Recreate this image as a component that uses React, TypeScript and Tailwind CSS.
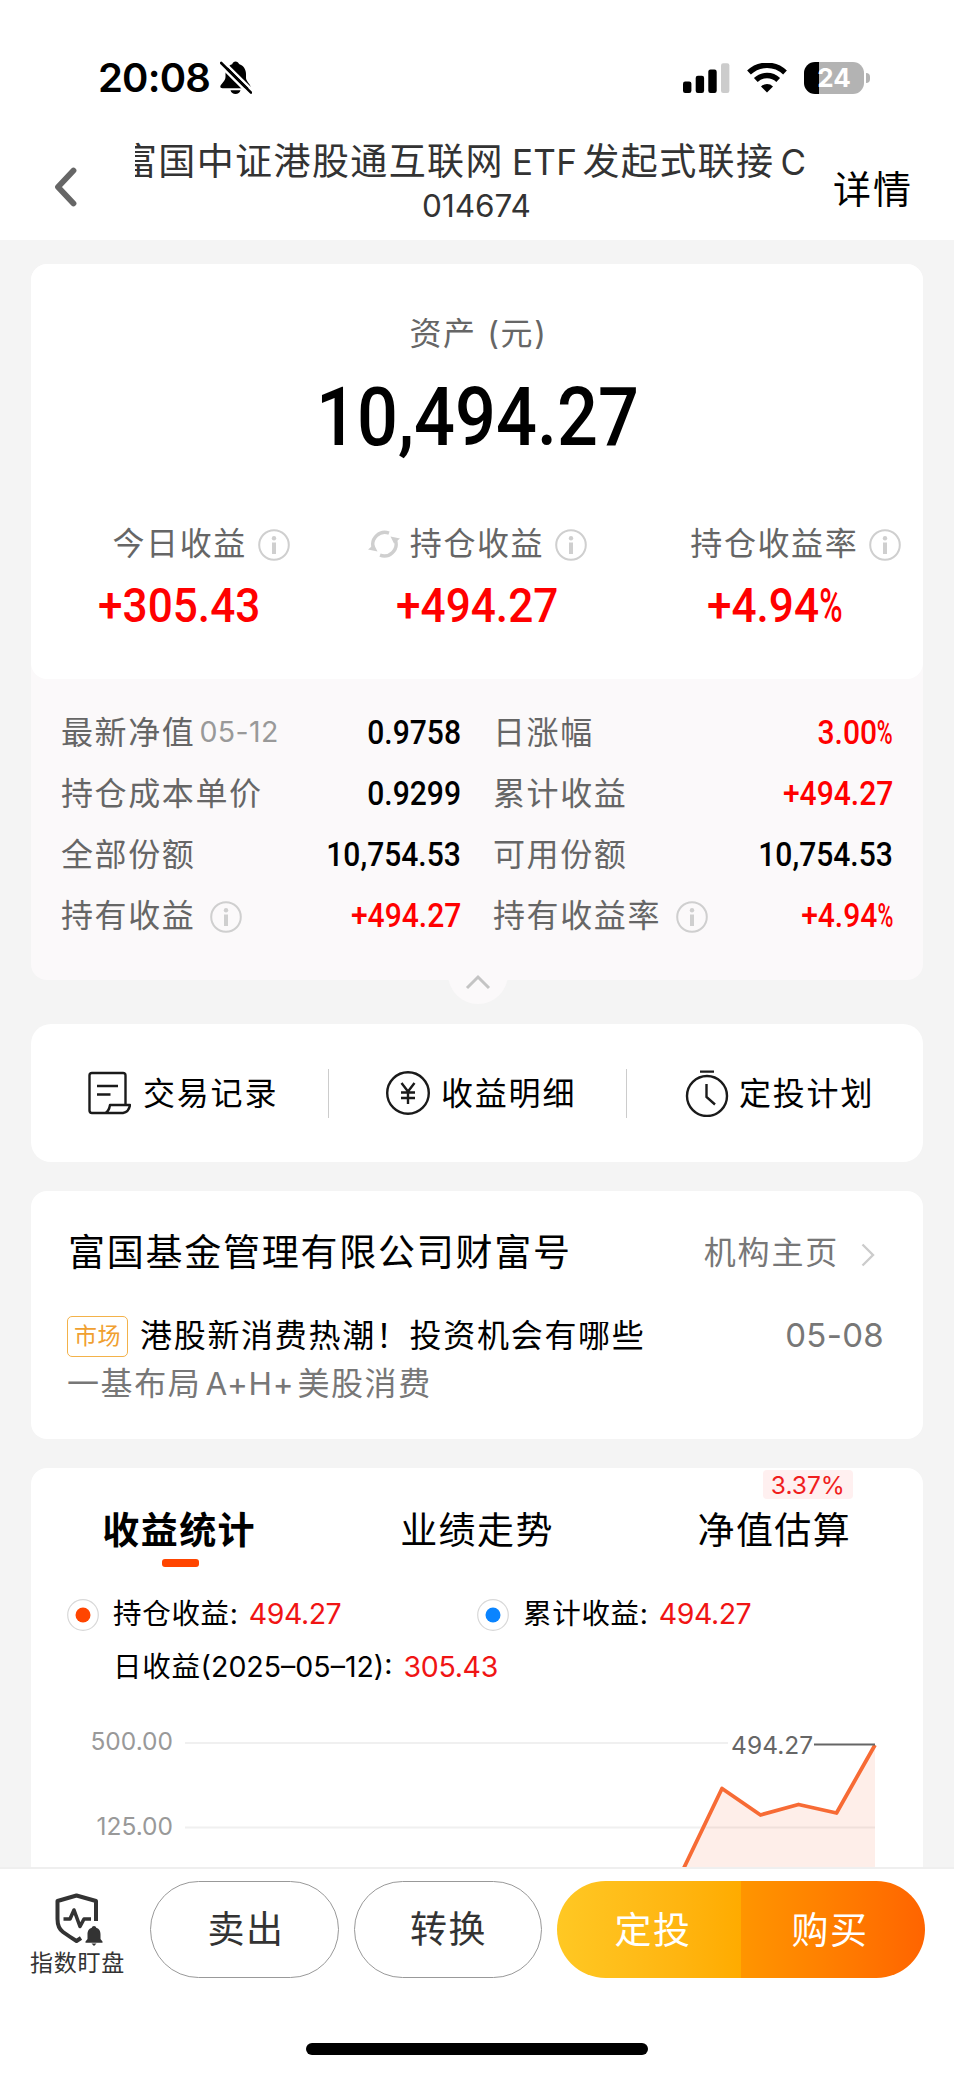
import React from "react";

type Cell = { label: string; note?: string; value: string; red?: boolean; info?: boolean };

const rows: Cell[][] = [
  [
    { label: "最新净值", note: "05-12", value: "0.9758" },
    { label: "日涨幅", value: "3.00%", red: true },
  ],
  [
    { label: "持仓成本单价", value: "0.9299" },
    { label: "累计收益", value: "+494.27", red: true },
  ],
  [
    { label: "全部份额", value: "10,754.53" },
    { label: "可用份额", value: "10,754.53" },
  ],
  [
    { label: "持有收益", value: "+494.27", red: true, info: true },
    { label: "持有收益率", value: "+4.94%", red: true, info: true },
  ],
];

const stats = [
  { label: "今日收益", value: "+305.43", refresh: false },
  { label: "持仓收益", value: "+494.27", refresh: true },
  { label: "持仓收益率", value: "+4.94%", refresh: false },
];

// the percent sign is drawn narrower than the digits
const Amount = ({ value }: { value: string }) =>
  value.endsWith("%") ? (
    <>
      {value.slice(0, -1)}
      <span className="-mr-[.2em] inline-block origin-left scale-x-[.72]">%</span>
    </>
  ) : (
    <>{value}</>
  );

const InfoIcon = ({ className = "" }: { className?: string }) => (
  <svg viewBox="0 0 32 32" className={`h-8 w-8 shrink-0 ${className}`}>
    <circle cx="16" cy="16" r="14.8" fill="none" stroke="#cfcfcf" strokeWidth="2" />
    <circle cx="16" cy="9.3" r="2.2" fill="#cfcfcf" />
    <rect x="14" y="13.5" width="4" height="11.5" fill="#cfcfcf" />
  </svg>
);

const RefreshIcon = () => (
  <svg viewBox="0 0 32 28" className="-ml-[42px] mr-[10px] h-7 w-8 shrink-0">
    <g fill="none" stroke="#cfcfcf" strokeWidth="3.4">
      <path d="M5.2 17.5A12 12 0 0 1 21 3.2" />
      <path d="M27.6 10.5A12 12 0 0 1 12 25.2" />
    </g>
    <path d="M0 19.5L6 14.5L9.5 21.5Z" fill="#cfcfcf" />
    <path d="M32 8.5L26 13.5L22.5 6.5Z" fill="#cfcfcf" />
  </svg>
);

const StatusBar = () => (
  <div className="flex h-[124px] shrink-0 items-end pr-[84px] pb-[30px] pl-[98px]">
    <div className="flex h-8 flex-1 items-center">
      <span className="text-[40px] leading-8 font-semibold tracking-[-.8px] text-black">20:08</span>
      <svg viewBox="0 0 32 34" className="ml-[10px] h-[34px] w-8">
        <path d="M12.2 3.2C12.8 1.4 14 .4 15.5 .4C17.2 .4 18.5 1.4 19 3C23.5 4.4 26 8.5 26 13V17C26 20 30.5 23.5 30.5 25.5C30.5 26.8 29.8 27.2 28.5 27.2H2.5C1 27.2 .3 26.5 .3 25.5C.3 23.5 5.5 20 5.5 16V13C5.5 8.5 8 4.4 12.2 3.2Z" fill="#000" />
        <path d="M10.5 29.3H20.5C19.8 31.8 18 33 15.5 33C13 33 11.2 31.8 10.5 29.3Z" fill="#000" />
        {/* white gaps on both sides of the slash, and nothing of the bell's shoulder left of it */}
        <path d="M3.4 .4L33 29.8" stroke="#fff" strokeWidth="2.4" />
        <path d="M-1.2 3.2L28.6 32.8" stroke="#fff" strokeWidth="2.6" />
        <path d="M1.2 2L31 31.6" stroke="#000" strokeWidth="2.6" strokeLinecap="round" />
      </svg>
    </div>
    <div className="flex h-8 items-center">
      <svg viewBox="0 0 47 30" className="mr-[17px] h-[30px] w-[47px]">
        <rect x="0" y="18.5" width="8.4" height="11.5" rx="2.2" />
        <rect x="12.7" y="12.7" width="8.4" height="17.3" rx="2.2" />
        <rect x="25.3" y="6.5" width="8.4" height="23.5" rx="2.2" />
        <rect x="38" y="0.3" width="8.4" height="29.7" rx="2.2" fill="#cccccc" />
      </svg>
      <svg viewBox="0 0 40 30" className="mr-[17px] h-[30px] w-10">
        <path d="M2 9.5A26 26 0 0 1 38 9.5" fill="none" stroke="#000" strokeWidth="5.4" />
        <path d="M8.8 17A16.2 16.2 0 0 1 31.2 17" fill="none" stroke="#000" strokeWidth="5.4" />
        <path d="M20 29.5L14 23.4A8.6 8.6 0 0 1 26 23.4Z" fill="#000" />
      </svg>
      <div className="flex h-8 w-[60px] items-center justify-center rounded-[11px] bg-[linear-gradient(90deg,#000_25%,#b3b3b3_25%)] text-[26px] leading-8 font-bold text-white">
        24
      </div>
      <div className="ml-[2px] h-[10px] w-[4px] rounded-r-full bg-[#b3b3b3]" />
    </div>
  </div>
);

const Header = () => (
  <div className="flex h-[116px] shrink-0">
    <div className="w-[135px] pt-[43px] pl-[54px]">
      <svg viewBox="0 0 23 40" className="h-10 w-[23px]">
        <path d="M19.5 3.5L4 20L19.5 36.5" fill="none" stroke="#666" strokeWidth="5.8" strokeLinecap="round" strokeLinejoin="round" />
      </svg>
    </div>
    <div className="w-[671px] text-[#333]">
      <div className="mt-4 flex h-11 justify-end overflow-hidden text-[37px] leading-[44px] tracking-[1.4px] whitespace-nowrap">
        <span>富国中证港股通互联网</span>
        <span className="mr-[5px] ml-[8px] text-[35px] tracking-[.4px]">ETF</span>
        <span>发起式联接</span>
        <span className="ml-[6px] text-[35px] tracking-normal">C</span>
      </div>
      <div className="mt-[6px] pl-3 text-center text-[31.5px] leading-[32px]">014674</div>
    </div>
    <div className="flex h-[131px] flex-1 items-center pl-[27px] text-[38px] tracking-[2px] text-black">详情</div>
  </div>
);

const AssetCard = () => (
  <div className="relative h-[716px] shrink-0 rounded-[16px] bg-[#fbf9fa]">
    <div className="flex h-[415px] flex-col rounded-[16px] bg-white">
      <div className="mt-[50px] h-10 pl-[3px] text-center text-[32px] leading-10 tracking-[1.6px] text-[#666]">资产 (元)</div>
      <div className="mt-[24px] h-20 text-center font-['Roboto'] text-[81px] leading-[80px] font-medium text-black">
        <span className="inline-block scale-x-[.89]">10,494.27</span>
      </div>
      <div className="mt-[66px] grid grid-cols-3">
        {stats.map((s, index) => (
          <div key={index} className="flex flex-col items-center">
            <div className="flex h-10 items-center text-[32px] leading-10 tracking-[1.6px] whitespace-nowrap text-[#666]">
              {s.refresh && <RefreshIcon />}
              <span>{s.label}</span>
              <InfoIcon className="mt-[2px] ml-[11px] -mr-[43px]" />
            </div>
            <span className="mt-[18px] scale-x-[.92] font-['Roboto'] text-[48px] leading-[48px] font-medium text-[#f00]">
              <Amount value={s.value} />
            </span>
          </div>
        ))}
      </div>
    </div>
    <div className="mt-[23px] px-[30px]">
      {rows.map((row, index) => (
        <div key={index} className="flex h-[61px] items-center">
          {row.map((cell, i) => (
            <div key={i} className={`flex items-center ${i === 0 ? "w-[400px]" : "ml-8 w-[400px]"}`}>
              <span className="text-[32px] leading-[60px] tracking-[1.6px] text-[#666]">{cell.label}</span>
              {cell.note && <span className="ml-[4px] text-[28.5px] tracking-[.4px] text-[#999]">{cell.note}</span>}
              {cell.info && <InfoIcon className="mt-[2px] ml-[15px]" />}
              <span
                className={`ml-auto origin-right scale-x-[.91] font-['Roboto'] text-[33px] leading-[60px] font-medium ${
                  cell.red ? "text-[#f00]" : "text-black"
                }`}
              >
                <Amount value={cell.value} />
              </span>
            </div>
          ))}
        </div>
      ))}
    </div>
    {/* collapse handle hangs below the card */}
    <div className="absolute bottom-[-24px] left-[417px] flex h-[60px] w-[60px] items-center justify-center rounded-full bg-[#fbf9fa]">
      <svg viewBox="0 0 26 16" className="mt-[16px] h-4 w-[26px]">
        <path d="M2 14L13 3L24 14" fill="none" stroke="#c4c4c4" strokeWidth="3" />
      </svg>
    </div>
  </div>
);

const Shortcuts = () => (
  <div className="mt-11 flex h-[138px] shrink-0 items-center rounded-[20px] bg-white text-[32px] leading-10 tracking-[1.8px] text-black">
    <div className="flex w-[297px] items-center pl-[56px]">
      <svg viewBox="0 0 44 44" className="mr-[12px] h-11 w-11" fill="none" stroke="#1a1a1a" strokeWidth="2.4" strokeLinejoin="round">
        <path d="M38.5 33V4.5Q38.5 2 36 2H5Q2.5 2 2.5 4.500V39.5Q2.5 42 5 42H36Q42 41 43 34H23Q22 40.5 18 42" />
        <path d="M10 15H31M10 23.5H23.5" />
      </svg>
      <span className="pt-[2px]">交易记录</span>
    </div>
    <div className="h-[49px] w-px bg-[#ccc]" />
    <div className="flex w-[297px] items-center pl-[57px]">
      <svg viewBox="0 0 44 44" className="mr-[11px] h-11 w-11" fill="none" stroke="#1a1a1a" strokeWidth="2.4">
        <circle cx="22" cy="22" r="20.8" />
        <path d="M15.5 12L22 20.5L28.5 12M22 20.5V33M15 21.5H29M15 27H29" />
      </svg>
      <span className="pt-[2px]">收益明细</span>
    </div>
    <div className="h-[49px] w-px bg-[#ccc]" />
    <div className="flex flex-1 items-center pl-[58px]">
      <svg viewBox="0 0 44 48" className="mr-[10px] h-12 w-11" fill="none" stroke="#1a1a1a" strokeWidth="2.4">
        <circle cx="22" cy="27" r="20" />
        <path d="M15 2.6H29M21.5 15V28L30 35.5" />
      </svg>
      <span className="pt-[2px]">定投计划</span>
    </div>
  </div>
);

const OrgCard = () => (
  <div className="mt-[29px] h-[248px] shrink-0 rounded-[16px] bg-white pr-[40px] pl-[36px]">
    <div className="flex h-[124px] items-center">
      <span className="pl-px text-[37px] tracking-[1.75px] text-black">富国基金管理有限公司财富号</span>
      <span className="ml-auto text-[32px] tracking-[1.8px] text-[#777]">机构主页</span>
      <svg viewBox="0 0 14 24" className="mt-1 mr-[8px] ml-[22px] h-6 w-[14px]">
        <path d="M1.5 1.5L12 12L1.5 22.5" fill="none" stroke="#ccc" strokeWidth="2.4" />
      </svg>
    </div>
    <div className="-mt-px flex h-[44px] items-center">
      <span className="flex h-[41px] w-[61px] items-center justify-center rounded-[5px] border border-[#f3b24a] text-[23px] tracking-[.6px] text-[#f0a030]">
        市场
      </span>
      <span className="ml-[12px] text-[32px] tracking-[1.7px] text-black">港股新消费热潮！投资机会有哪些</span>
      <span className="-mr-[1px] ml-auto text-[33px] tracking-[.3px] text-[#777]">05-08</span>
    </div>
    <div className="flex h-[52px] items-center text-[32px] tracking-[1.6px] text-[#777]">
      <span>一基布局</span>
      <span className="mr-[3px] ml-[4px] text-[31.5px] tracking-[.8px]">A+H+</span>
      <span>美股消费</span>
    </div>
  </div>
);

const Legend = ({ color, label, value }: { color: string; label: string; value: string }) => (
  <div className="flex w-[410px] items-center">
    <svg viewBox="0 0 32 32" className="mt-[2px] mr-[14px] h-8 w-8">
      <circle cx="16" cy="16" r="15.3" fill="none" stroke="#d8d8d8" strokeWidth="1.2" />
      <circle cx="16" cy="16" r="7.5" fill={color} />
    </svg>
    <span className="tracking-[.7px] text-black">{label}</span>
    <span className="ml-[10px] tracking-[-.45px] text-[#f01414]">{value}</span>
  </div>
);

const StatsCard = () => (
  <div className="mt-[29px] h-[440px] shrink-0 rounded-t-[16px] bg-white">
    <div className="grid h-[100px] grid-cols-3 text-center text-[37px] leading-[50px] tracking-[1.4px] text-black">
      <div className="flex flex-col items-center pt-[38px] pr-px">
        <span className="font-bold">收益统计</span>
        <span className="mt-[3px] ml-[3px] h-2 w-[37px] shrink-0 rounded-[3px] bg-[#ff4500]" />
      </div>
      <div className="pt-[38px]">业绩走势</div>
      <div className="flex flex-col items-center pt-[2px]">
        <span className="-mr-[67px] h-[29px] w-[90px] rounded-[4px] bg-[#fff0f0] text-[24.5px] leading-[30px] tracking-normal text-[#f01d1d]">
          3.37%
        </span>
        <span className="mt-[7px]">净值估算</span>
      </div>
    </div>
    <div className="mt-[19px] flex h-[53px] items-center pl-[36px] text-[28.5px] leading-[53px]">
      <Legend color="#ff4500" label="持仓收益:" value="494.27" />
      <Legend color="#0a84ff" label="累计收益:" value="494.27" />
    </div>
    <div className="flex h-[53px] items-center pl-[82px] text-[28.5px] leading-[53px] text-black">
      <span className="tracking-[.7px]">日收益</span>
      <span>(2025–05–12):</span>
      <span className="ml-[11px] tracking-[-.3px] text-[#f01414]">305.43</span>
    </div>
    {/* profit curve, cut off by the action bar */}
    <svg viewBox="0 0 892 180" className="h-[180px] w-[892px]">
      <path d="M154 50H697M154 134.5H844" stroke="#f0f0f0" strokeWidth="2" />
      <path d="M649 183L691 95.5L729.5 122L767.5 111.5L805.5 120L844 52V183Z" fill="#f4714a" fillOpacity=".12" />
      <path d="M649 183L691 95.5L729.5 122L767.5 111.5L805.5 120L844 52" fill="none" stroke="#f76b35" strokeWidth="3.8" strokeLinejoin="round" />
      <path d="M783 51.5H844" stroke="#666" strokeWidth="2" />
      <g fontSize="24.5" textAnchor="end">
        <text x="142" y="57" fill="#999">500.00</text>
        <text x="142" y="141.5" fill="#999">125.00</text>
        <text x="782" y="60.5" fill="#666">494.27</text>
      </g>
    </svg>
  </div>
);

const ActionBar = () => (
  <div className="absolute bottom-0 left-0 h-[207px] w-full border-t-2 border-[#efefef] bg-white">
    <div className="flex pt-3 text-[37px] tracking-[1.6px] text-[#333]">
      <div className="ml-[30px] flex w-[95px] flex-col items-center pt-[12px]">
        <svg viewBox="0 0 48 54" className="ml-[3px] h-[54px] w-12" fill="none" stroke="#333" strokeWidth="4" strokeLinejoin="round">
          <path d="M41 28V8L21.5 2.5L2.5 8V26Q2.5 35 8 39Q15 44 21.5 48L26 45" />
          <path d="M8.5 26H15L19 17L25 33.5L29 26H36" strokeWidth="3.6" />
          <path d="M39 33C40.200 33 41 33.800 41.200 34.800C44.500 35.800 45.500 38.500 45.500 41.500V46L47.500 48.500V49.800H30.500V48.500L32.500 46V41.500C32.500 38.500 33.500 35.800 36.800 34.800C37 33.800 37.800 33 39 33Z" fill="#333" stroke="none" />
          <path d="M36.500 50.500H41.500L39 53Z" fill="#333" stroke="none" />
        </svg>
        <span className="text-[23px] leading-[32px] tracking-[.7px] whitespace-nowrap">指数盯盘</span>
      </div>
      <button className="ml-[25px] h-[97px] w-[189px] rounded-full border border-[#999] pt-px pl-[3px]">卖出</button>
      <button className="ml-[15px] h-[97px] w-[188px] rounded-full border border-[#999] pt-px pl-px">转换</button>
      <div className="ml-[15px] flex h-[97px] w-[368px] overflow-hidden rounded-full text-white">
        <button className="w-[184px] bg-linear-to-r from-[#ffc823] to-[#ffab00] pt-[2px] pl-[8px]">定投</button>
        <button className="w-[184px] bg-linear-to-r from-[#ff9500] to-[#ff6400] pt-[2px] pr-[6px]">购买</button>
      </div>
    </div>
    <div className="mx-auto mt-[64px] h-[12px] w-[342px] rounded-full bg-black" />
  </div>
);

const App = () => {
  return (
    <div className="relative flex h-[2074px] w-[954px] flex-col overflow-hidden bg-white font-['Inter','Noto_Sans_CJK_SC',sans-serif]">
      <StatusBar />
      <Header />
      <div className="flex flex-1 flex-col bg-[#f4f4f4] px-[31px] pt-6">
        <AssetCard />
        <Shortcuts />
        <OrgCard />
        <StatsCard />
      </div>
      <ActionBar />
    </div>
  );
};

export default App;
